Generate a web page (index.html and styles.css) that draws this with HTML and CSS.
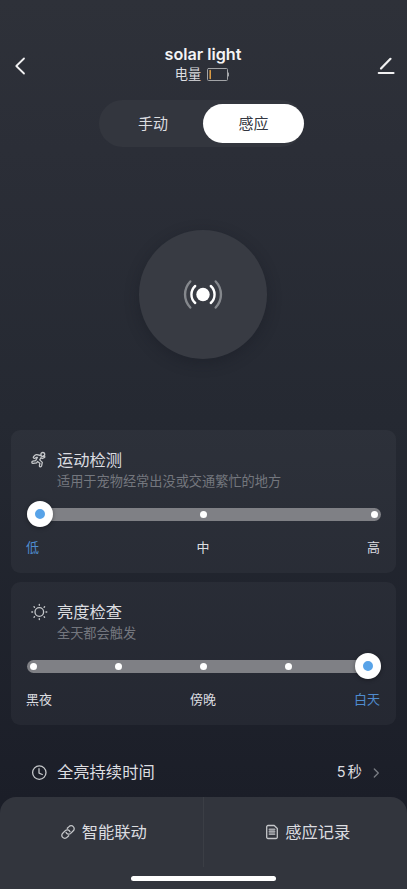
FILE: index.html
```html
<!DOCTYPE html>
<html lang="zh-CN">
<head>
<meta charset="utf-8">
<meta name="viewport" content="width=device-width, initial-scale=1">
<title>solar light</title>
<link rel="stylesheet" href="styles.css">
</head>
<body>
<div class="screen">
  <header class="header">
    <svg class="back" width="14" height="20" viewBox="0 0 14 20"><path d="M11 2.500 3.300 10 11 17.500"/></svg>
    <div class="heading">
      <h1>solar light</h1>
      <div class="battery"><span>电量</span>
        <svg width="24" height="14" viewBox="0 0 24 14"><rect class="shell" x=".5" y="1.500" width="20" height="12" rx="1"/><path class="shell" d="M21.500 6v3"/><path class="charge" d="M3.200 3.500v8"/></svg>
      </div>
    </div>
    <svg class="edit" width="20" height="20" viewBox="0 0 20 20"><path d="M5 13.500 14.500 3.800M2.800 18h14.700"/></svg>
  </header>

  <nav class="tabs"><span class="tab">手动</span><span class="tab active">感应</span></nav>

  <div class="sensor">
    <svg width="44" height="34" viewBox="0 0 44 34"><circle cx="22" cy="16.500" r="6.700" fill="#fff"/><g fill="none" stroke-linecap="round" stroke-width="2.400"><path stroke="#fff" d="M14.200 8c-5 4.500-5 12.500 0 17M29.800 8c5 4.500 5 12.500 0 17"/><path stroke="#85888d" d="M9.300 3.500c-7 7.500-7 18.500 0 26M34.700 3.500c7 7.500 7 18.500 0 26"/></g></svg>
  </div>

  <main class="settings">
    <section class="card">
      <div class="info">
        <svg class="icon" width="18" height="18" viewBox="0 0 18 18"><circle cx="12.800" cy="3.400" r="1.900"/><path d="M10.600 4.500 6.800 3.700a2 2 0 0 0-1.500.4L3.700 5.400c-1 1 .1 2.500 1.300 1.800l1.500-.9h1L5.600 9.700l-2.800.4c-1.500.3-1.200 2.300.3 2.200l3.500-.5.900-1.300 2.400 1.700-.5 2.300c-.2 1.500 1.800 1.900 2.200.4l.7-3.500-2.600-2.500 1.400-2.200 1.200.8 1.800-.9c1.300-.7.700-2-.5-1.700"/></svg>
        <div><h2>运动检测</h2><p>适用于宠物经常出没或交通繁忙的地方</p></div>
      </div>
      <div class="track"><i class="thumb"></i><i class="stop"></i><i class="stop"></i></div>
      <div class="labels"><span class="chosen">低</span><span>中</span><span>高</span></div>
    </section>

    <section class="card">
      <div class="info">
        <svg class="icon" width="18" height="18" viewBox="0 0 18 18"><circle cx="9.300" cy="9" r="4.300"/><path d="M9.300 1.500v.8M9.300 15.700v.8M1.800 9h.8M16 9h.8M4 3.700l.5.500M14.100 13.800l.5.500M14.600 3.700l-.5.500M4.500 13.800l-.5.500"/></svg>
        <div><h2>亮度检查</h2><p>全天都会触发</p></div>
      </div>
      <div class="track"><i class="stop"></i><i class="stop"></i><i class="stop"></i><i class="stop"></i><i class="thumb"></i></div>
      <div class="labels"><span>黑夜</span><span>傍晚</span><span class="chosen">白天</span></div>
    </section>

    <div class="row">
      <svg class="icon" width="18" height="18" viewBox="0 0 18 18"><circle cx="9.300" cy="8.600" r="6.700"/><path d="M9 4.700v4.400l3.300 1.400"/></svg>
      <h2>全亮持续时间</h2>
      <span class="value">5<span>秒</span></span>
      <svg class="more" width="7" height="10" viewBox="0 0 7 10"><path d="m1.300 1 4 4-4 4"/></svg>
    </div>
  </main>

  <footer class="footer">
    <div class="actions">
      <div class="action">
        <svg class="icon" width="16" height="16" viewBox="0 0 16 16"><path d="M7.300 4.300 9 2.600a2.900 2.900 0 0 1 4.300 0 2.900 2.900 0 0 1 0 4.200l-2.600 2.600a2.900 2.900 0 0 1-4.700-1.100M8.700 11.700 7 13.400a2.900 2.900 0 0 1-4.300 0 2.900 2.900 0 0 1 0-4.200l2.600-2.600A2.900 2.900 0 0 1 10 7.700"/></svg>
        <span>智能联动</span>
      </div>
      <div class="action">
        <svg class="icon" width="14" height="16" viewBox="0 0 14 16"><path d="M3 1.500h6.200l3.100 3v8.700a1.300 1.300 0 0 1-1.300 1.300H3a1.300 1.300 0 0 1-1.300-1.300V2.800A1.300 1.300 0 0 1 3 1.500z"/><path class="lines" d="M4.500 5.500h5M4.500 7.800h5M4.500 10.100h5"/></svg>
        <span>感应记录</span>
      </div>
    </div>
    <div class="home-bar"></div>
  </footer>
</div>
</body>
</html>
```
FILE: styles.css
```css
* { box-sizing: border-box; }
body {
  margin: 0;
  font-family: Inter, "Noto Sans CJK SC", sans-serif;
  color: #dcdde0;
}
h1, h2, p { margin: 0; font-weight: 400; }
svg { display: block; flex: none; fill: none; stroke-linecap: round; stroke-linejoin: round; }
.screen {
  width: 407px;
  height: 889px;
  display: flex;
  flex-direction: column;
  overflow: hidden;
  background: linear-gradient(#2e3139 0, #2b2e37 150px, #252932 420px, #1b1e28 800px);
}

.header {
  height: 100px;
  flex: none;
  padding: 44px 11px 0 13px;
  display: flex;
  justify-content: space-between;
}
.back { margin-top: 12px; stroke: #f1f1f2; stroke-width: 1.800; }
.edit { margin-top: 11px; stroke: #f1f1f2; stroke-width: 2.200; }
.heading { display: flex; flex-direction: column; align-items: center; padding-left: 3px; }
.heading h1 { font-size: 16.200px; line-height: 21px; font-weight: 600; color: #f4f4f5; }
.battery { display: flex; align-items: center; gap: 6px; font-size: 13.200px; line-height: 18px; }
.shell { stroke: #a2a4a7; stroke-width: 1; }
.charge { stroke: #d99b45; stroke-width: 1.600; }

.tabs {
  width: 205px;
  height: 47px;
  flex: none;
  margin-left: 99px;
  padding: 4px 0;
  display: flex;
  border-radius: 24px;
  background: #33363e;
}
.tab { flex: 1; padding-left: 4px; border-radius: 20px; text-align: center; font-size: 15px; line-height: 39px; }
.tab.active { flex: 0 0 101px; padding: 0; background: #fff; color: #333640; }

.sensor {
  width: 128px;
  height: 129px;
  flex: none;
  margin: 83px 0 70.500px 139px;
  display: grid;
  place-items: center;
  border-radius: 50%;
  background: #383b43;
  box-shadow: 0 4px 14px rgba(20, 23, 31, .35);
}

.settings { padding: 0 11px; display: flex; flex-direction: column; gap: 9px; }
.card { height: 143px; padding: 19px 15px 0; border-radius: 9px; background: rgba(255, 255, 255, .038); }
.info { display: flex; height: 42px; padding-left: 4px; gap: 9px; }
.icon { stroke: #c5c7ca; stroke-width: 1.300; }
.info .icon { margin-top: 2px; }
h2 { font-size: 16.300px; line-height: 22px; }
.info p { font-size: 13.200px; line-height: 20px; color: #74777e; }
.track {
  width: 354px;
  height: 13px;
  margin: 17px 0 0 .5px;
  padding: 0 3px;
  display: flex;
  align-items: center;
  justify-content: space-between;
  border-radius: 7px;
  background: #7f8085;
}
.stop { width: 7px; height: 7px; border-radius: 50%; background: #fff; }
.thumb {
  flex: none;
  width: 26px;
  height: 26px;
  margin: 0 -16px 0 -3px;
  border: 8.500px solid #fff;
  border-radius: 50%;
  background: #58a3e8;
  box-shadow: 0 1px 4px rgba(0, 0, 0, .35);
}
.thumb:last-child { margin: 0 -3px 0 -16px; }
.labels { width: 354px; margin-top: 16px; display: flex; justify-content: space-between; font-size: 13px; line-height: 20px; }
.chosen { color: #4f8cce; }
.row { height: 63px; padding: 12px 16px 0 19px; display: flex; align-items: flex-start; }
.row .icon { margin: 18px 9px 0 0; }
.row h2 { margin-top: 15px; flex: 1; }
.value { margin: 15px 11px 0 0; display: flex; gap: 2px; font-size: 14.500px; line-height: 22px; }
.more { margin-top: 22px; stroke: #797c83; stroke-width: 1.300; }

.footer {
  height: 92px;
  flex: none;
  margin-top: auto;
  display: flex;
  flex-direction: column;
  align-items: center;
  border-radius: 16px 16px 0 0;
  background: #32353d;
}
.actions { width: 100%; height: 70px; display: flex; }
.action { flex: 1; display: flex; align-items: center; justify-content: center; gap: 6px; padding-left: 4px; font-size: 16.300px; }
.action span { margin-top: -2px; }
.action + .action { border-left: 1px solid #3b3e45; padding-left: 5px; }
.lines { stroke-width: 1.900; stroke: #a5a7ac; }
.home-bar { width: 145px; height: 5px; margin-top: 9px; border-radius: 3px; background: #fff; }
```
